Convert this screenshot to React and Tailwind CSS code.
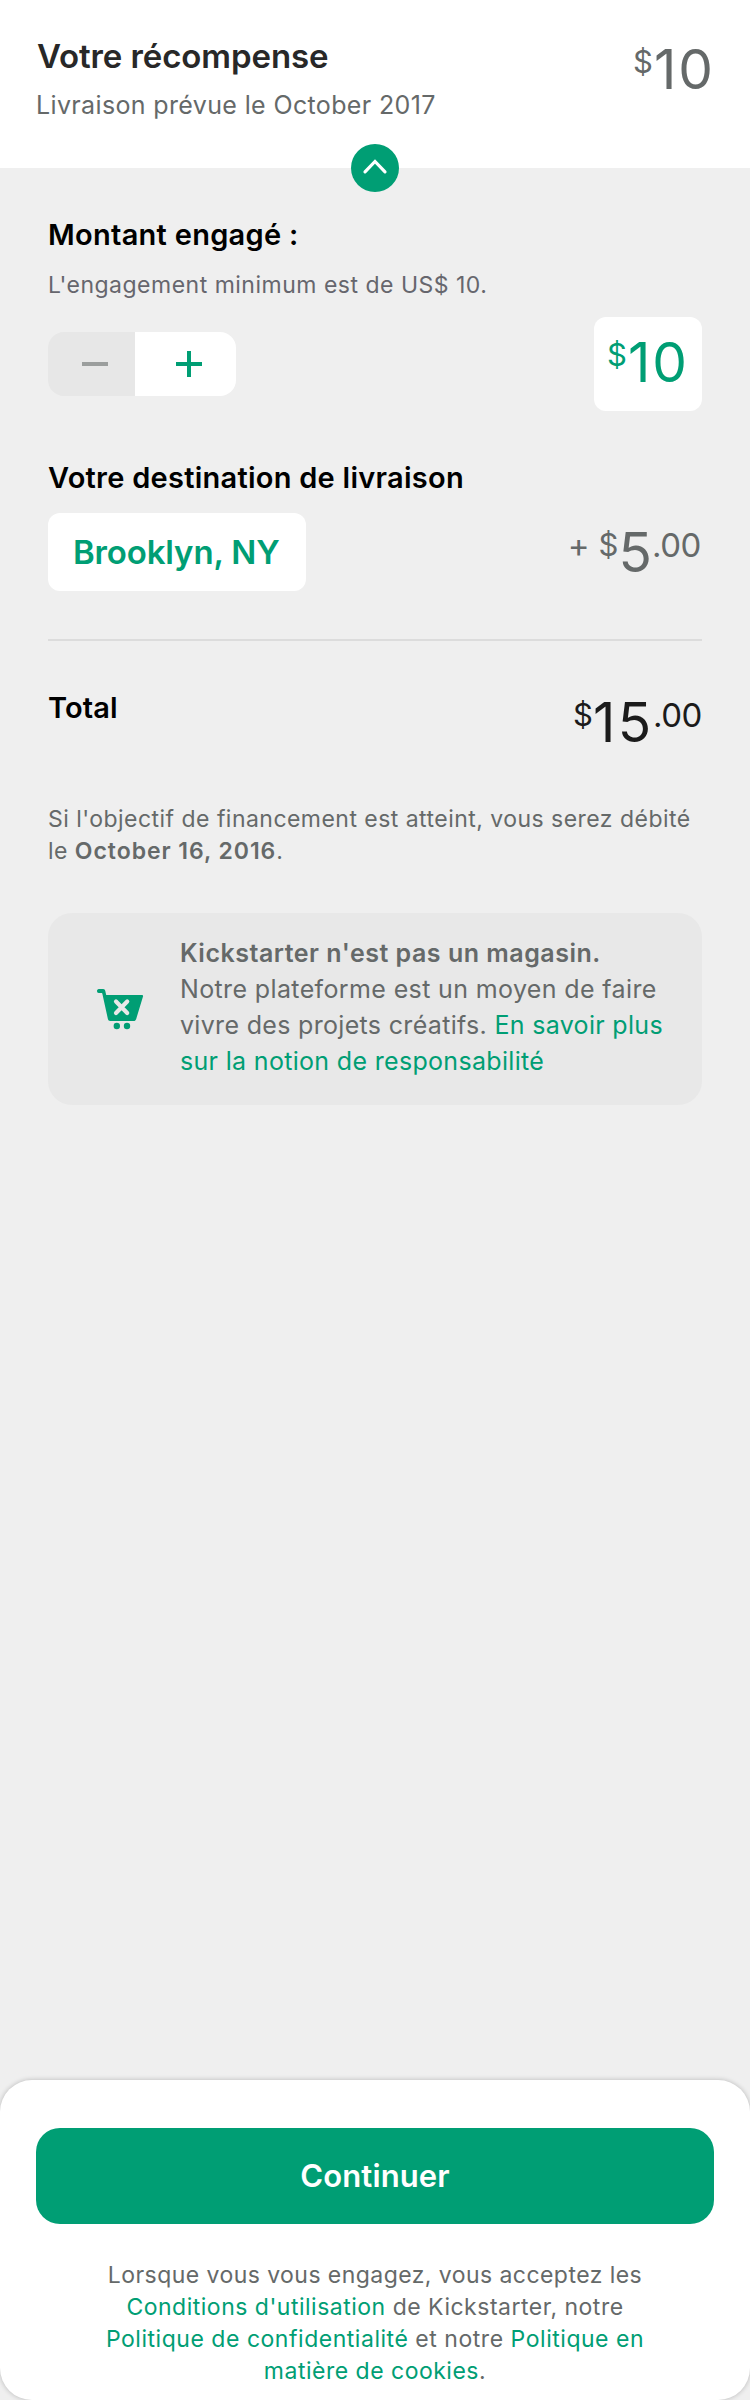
function Dollar({ className = "" }) {
  return <span className={`mt-[3px] text-[31px] leading-[40px] ${className}`}>$</span>;
}

function Cents({ className = "" }) {
  return (
    <span className={`mt-[3px] text-[33px] leading-[40px] tracking-[-0.4px] ${className}`}>.00</span>
  );
}

function Whole({ children, className = "" }) {
  return <span className={`text-[55px] leading-[60px] ${className}`}>{children}</span>;
}

function CartIcon() {
  return (
    <svg width="48" height="42" viewBox="0 0 48 42" fill="none">
      <path
        d="M2.8 1H7.200c1.2 0 1.800.8 2.100 2L10.200 7H46c1 0 1.300.6 1 1.500l-6.800 22.400c-.4 1.200-1.200 2.100-2.600 2.100H14.200c-1.300 0-2-.7-2.300-2L6.300 5.500 5.800 5h-3C1.600 5 1 4 1 3s.6-2 1.800-2z"
        fill="#009e74"
      />
      <path d="M20 13.600 31.200 24.900M31.200 13.600 20 24.900" stroke="#e8e8e8" strokeWidth="4.200" strokeLinecap="round" />
      <circle cx="20.800" cy="38" r="3.200" fill="#009e74" />
      <circle cx="31" cy="38" r="3.200" fill="#009e74" />
    </svg>
  );
}

function Header() {
  return (
    <header className="relative flex h-[168px] justify-between bg-white pl-[36px] pr-[35px]">
      <div className="flex flex-col whitespace-nowrap pt-[36px]">
        <h1 className="ml-px text-[33px] font-semibold leading-[40px] tracking-[-0.09px] text-[#282828]">
          Votre récompense
        </h1>
        <p className="mt-[13px] text-[25px] leading-[32px] tracking-[0.36px] text-[#656969]">
          Livraison prévue le October 2017
        </p>
      </div>
      <div className="flex items-start pt-[39px] text-[#656969]">
        <Dollar className="mr-px" />
        <Whole className="tracking-[2px]">10</Whole>
      </div>
      <div className="absolute -bottom-6 left-[351px] flex size-12 items-center justify-center rounded-full bg-[#009e74]">
        <svg width="48" height="48" viewBox="0 0 48 48" fill="none">
          <path d="M14 27.800 24 17.500l10 10.300" stroke="white" strokeWidth="3.200" strokeLinecap="round" />
        </svg>
      </div>
    </header>
  );
}

function Stepper() {
  return (
    <div className="flex h-16 w-[188px] overflow-hidden rounded-2xl">
      <button className="flex w-[87px] items-center bg-[#e7e7e7] pl-[34px]">
        <svg width="26" height="26" viewBox="0 0 26 26">
          <path d="M0 13h26" stroke="#9b9e9d" strokeWidth="4" />
        </svg>
      </button>
      <button className="flex flex-1 items-center bg-white pl-[41px]">
        <svg width="26" height="26" viewBox="0 0 26 26">
          <path d="M0 13h26M13 0v26" stroke="#009e74" strokeWidth="4" />
        </svg>
      </button>
    </div>
  );
}

export default function App() {
  return (
    <div className="flex h-[2400px] w-[750px] flex-col bg-[#efefef] font-['Inter',sans-serif]">
      <Header />
      <main className="flex flex-1 flex-col whitespace-nowrap px-12 pt-[49px]">
        <h2 className="text-[29px] font-semibold leading-[36px] tracking-[0.28px] text-black">
          Montant engagé :
        </h2>
        <p className="mt-[17px] text-[23px] leading-[30px] tracking-[0.5px] text-[#66666d]">
          L'engagement minimum est de US$ 10.
        </p>
        <div className="mt-[17px] flex items-center justify-between">
          <Stepper />
          <div className="flex h-[94px] w-[108px] items-start rounded-xl bg-white pl-[13px] pt-[15px] text-[#009e74]">
            <Dollar className="mr-px" />
            <Whole className="tracking-[2px]">10</Whole>
          </div>
        </div>

        <h2 className="mt-[49px] text-[29px] font-semibold leading-[36px] tracking-[0.26px] text-black">
          Votre destination de livraison
        </h2>
        <div className="mt-[17px] flex items-start justify-between">
          <button className="flex h-[78px] w-[258px] items-center justify-start rounded-xl bg-white pl-[25px] pt-px text-[33px] font-semibold tracking-[-0.15px] text-[#009e74]">
            Brooklyn, NY
          </button>
          <div className="flex items-start pr-px pt-[9px] text-[#656969]">
            <span className="mr-[9px] mt-[3px] text-[33px] leading-[40px]">+</span>
            <Dollar />
            <Whole>5</Whole>
            <Cents />
          </div>
        </div>

        <hr className="mt-12 h-[2px] border-0 bg-[#dcdcdc]" />

        <div className="mt-12 flex h-16 items-start justify-between">
          <h2 className="pt-px text-[29px] font-semibold leading-[36px] tracking-[0.1px] text-black">Total</h2>
          <div className="flex items-start pt-[3px] text-[#1b1b1b]">
            <Dollar />
            <Whole className="-mr-px tracking-[2.6px]">15</Whole>
            <Cents />
          </div>
        </div>

        <p className="mt-[50px] text-[23px] leading-[32px] tracking-[0.466px] text-[#656969]">
          Si l'objectif de financement est atteint, vous serez débité
          <br />
          le <span className="font-semibold tracking-[0.95px]">October 16, 2016</span>.
        </p>

        <section className="mt-[46px] flex h-48 items-start rounded-3xl bg-[#e8e8e8] pl-12">
          <div className="mt-[75px] w-12">
            <CartIcon />
          </div>
          <p className="ml-[36px] pt-[22px] text-[25px] leading-[36px] text-[#656969]">
            <span className="block font-semibold tracking-[0.51px]">Kickstarter n'est pas un magasin.</span>
            <span className="block tracking-[0.37px]">Notre plateforme est un moyen de faire</span>
            <span className="block tracking-[0.32px]">
              vivre des projets créatifs. <span className="text-[#009e74]">En savoir plus</span>
            </span>
            <span className="block tracking-[0.32px] text-[#009e74]">sur la notion de responsabilité</span>
          </p>
        </section>
      </main>

      <footer className="flex h-80 flex-col whitespace-nowrap rounded-[32px] bg-white px-9 pt-12 shadow-[0_0_5px_rgba(0,0,0,0.24)]">
        <button className="flex h-24 items-center justify-center rounded-3xl bg-[#009e74] text-[31px] font-semibold tracking-[0.12px] text-white">
          Continuer
        </button>
        <p className="mt-[35px] text-center text-[23px] leading-[32px] text-[#656969]">
          <span className="block tracking-[0.44px]">Lorsque vous vous engagez, vous acceptez les</span>
          <span className="block tracking-[0.5px]">
            <span className="text-[#009e74]">Conditions d'utilisation</span> de Kickstarter, notre
          </span>
          <span className="block tracking-[0.53px]">
            <span className="text-[#009e74]">Politique de confidentialité</span> et notre{" "}
            <span className="text-[#009e74]">Politique en</span>
          </span>
          <span className="block tracking-[0.5px]">
            <span className="text-[#009e74]">matière de cookies</span>.
          </span>
        </p>
      </footer>
    </div>
  );
}
